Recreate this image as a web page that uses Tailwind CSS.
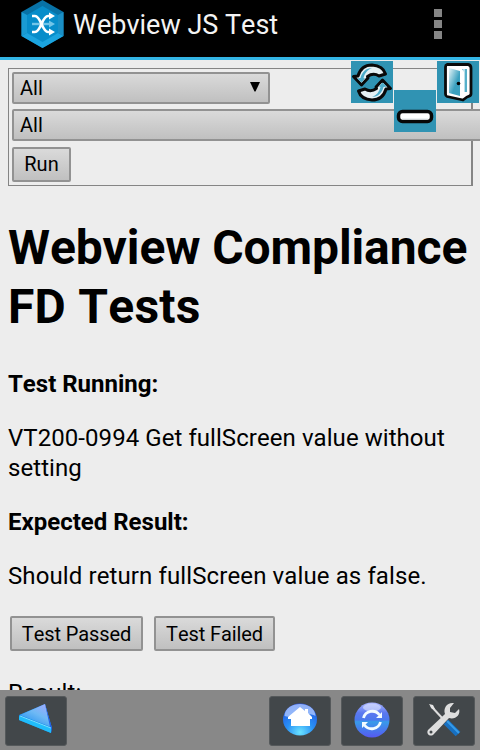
<!DOCTYPE html>
<html lang="en">
<head>
<meta charset="utf-8">
<title>Webview JS Test</title>
<script src="https://cdn.jsdelivr.net/npm/@tailwindcss/browser@4"></script>
</head>
<body class="w-[480px] h-[750px] overflow-hidden bg-[#ededed] text-black font-[Roboto,sans-serif]">
<div class="relative flex flex-col w-[480px] h-[750px] overflow-hidden [font-kerning:none]">
  <header class="flex items-start h-[60px] shrink-0 bg-black border-b-3 border-[#33b5e5] pl-[21px] pr-[38px]">
    <svg class="w-[43px] h-[48px] shrink-0" viewBox="0 0 43 48">
      <path d="M21.5 0 42.500 12V36L21.500 48 .5 36V12Z" fill="#0872a6"/>
      <path d="M.5 36 21.500 24 42.500 36 21.500 48Z" fill="#1ba4df"/>
      <path d="M.5 12 6 15V33L.5 36Z" fill="#1a9bd3"/><path d="M42.500 12 37 15V33L42.500 36Z" fill="#1a8fc5"/>
      <path d="M21.500 6 37 15V33L21.500 42 6 33V15Z" fill="#078dca"/>
      <path d="M11 24H30" stroke="#72c5e8" stroke-width="2.400"/><path d="M28 20.500 34 24 28 27.500Z" fill="#72c5e8"/>
      <path d="M11 16H14C20 16 21 32 27 32H30M11 32H14C20 32 21 16 27 16H30" fill="none" stroke="#fff" stroke-width="2.700"/>
      <path d="M28 12.500 34 16 28 19.500ZM28 28.500 34 32 28 35.500Z" fill="#fff"/>
    </svg>
    <h2 class="ml-[9px] mt-[9px] text-[27px] leading-[32px] text-[#f3f3f3] whitespace-nowrap">Webview JS Test</h2>
    <div class="ml-auto mt-[9px] flex flex-col gap-[3px]"><i class="size-[8px] bg-[#858585]"></i><i class="size-[8px] bg-[#858585]"></i><i class="size-[8px] bg-[#858585]"></i></div>
  </header>
  <main class="px-[8px] pt-[8px] grow overflow-hidden text-[24px] leading-[30px]">
    <section class="w-[465px] h-[118px] border border-r-2 border-[#858585] pl-[3px] pt-[3px] text-[20px] leading-[28px]">
      <div class="w-[258px] h-[32px] rounded-[2px] border-2 border-[#929292] bg-linear-to-b from-[#dadada] to-[#c0c0c0] flex items-center justify-between pl-[6px] pr-[8px]"><span>All</span><svg class="w-[10px] h-[10px] mb-[2px]" viewBox="0 0 10 10"><path d="M0 0H10L5.500 9.500H4.500Z"/></svg></div>
      <div class="mt-[5px] w-[480px] h-[32px] rounded-[2px] border-2 border-[#929292] bg-linear-to-b from-[#dadada] to-[#c0c0c0] flex items-center pl-[6px]">All</div>
      <button class="mt-[6px] w-[59px] h-[35px] rounded-[2px] border-2 border-[#929292] bg-linear-to-b from-[#dadada] to-[#c0c0c0] flex items-center justify-center pb-[2px]">Run</button>
    </section>
    <h1 class="mt-[32px] text-[48px] leading-[59px] font-bold whitespace-nowrap tracking-[-0.1px]">Webview Compliance<br><span class="tracking-[0.25px]">FD Tests</span></h1>
    <p class="mt-[33px] font-bold">Test Running:</p>
    <p class="mt-[24px] whitespace-nowrap tracking-[0.06px]">VT200-0994 Get fullScreen value without<br>setting</p>
    <p class="mt-[24px] font-bold">Expected Result:</p>
    <p class="mt-[24px] whitespace-nowrap tracking-[0.11px]">Should return fullScreen value as false.</p>
    <div class="mt-[25px] ml-[2px] flex gap-[11px] text-[20px] leading-[28px] whitespace-nowrap">
      <button class="w-[133px] h-[35px] rounded-[2px] border-2 border-[#929292] bg-linear-to-b from-[#dadada] to-[#c0c0c0] flex items-center justify-center tracking-[-0.1px]">Test Passed</button>
      <button class="w-[121px] h-[35px] rounded-[2px] border-2 border-[#929292] bg-linear-to-b from-[#dadada] to-[#c0c0c0] flex items-center justify-center tracking-[-0.1px]">Test Failed</button>
    </div>
    <p class="mt-[27px] tracking-[0.1px]">Result:</p>
  </main>
  <footer class="h-[60px] shrink-0 bg-[#888] flex items-start pt-[6px] pl-[5px] pr-[5px] gap-[10px]">
    <div class="w-[62px] h-[50px] mr-auto rounded-[3px] border border-[#55595b] bg-[#42474a]">
      <svg class="w-[60px] h-[48px]" viewBox="0 0 60 48">
        <defs><linearGradient id="a" x1="1" y1="0" x2=".3" y2="1"><stop stop-color="#a9a7ff"/><stop offset=".5" stop-color="#6eb9f5"/><stop offset="1" stop-color="#218ff0"/></linearGradient></defs>
        <path d="M39 7 13 18V23L45 36 46 31Z" fill="#168bea"/><path d="M39 7 14 18 45 30Z" fill="url(#a)"/><path d="M39 7 46 31 45 36 44 30Z" fill="#2460e4"/><path d="M13 19 45 31 45 36 13 23Z" fill="#20bdfb"/><path d="M14 19 45 31" stroke="#78e1ff"/>
      </svg>
    </div>
    <div class="w-[62px] h-[50px] rounded-[3px] border border-[#55595b] bg-[#42474a]">
      <svg class="w-[60px] h-[48px]" viewBox="0 0 60 48">
        <defs><radialGradient id="b" cx=".5" cy=".9" r=".9"><stop stop-color="#6be4ff"/><stop offset=".45" stop-color="#288ff5"/><stop offset="1" stop-color="#244fe0"/></radialGradient></defs>
        <ellipse cx="30" cy="22.500" rx="17" ry="16" fill="url(#b)"/><path d="M14.500 19C15 3 45 3 45.500 19 38 14 22 22 14.500 19Z" fill="#b5cfff" opacity=".75"/>
        <path d="M30 10 18 20V22H21V29H40V22H42V20L38 16V12H35V14Z" fill="#fff"/>
      </svg>
    </div>
    <div class="w-[62px] h-[50px] rounded-[3px] border border-[#55595b] bg-[#42474a]">
      <svg class="w-[60px] h-[48px]" viewBox="0 0 60 48">
        <defs><linearGradient id="c" x1="0" y1="0" x2="0" y2="1"><stop stop-color="#a9b4ff"/><stop offset=".3" stop-color="#5b78f0"/><stop offset=".5" stop-color="#4a78ee"/><stop offset=".55" stop-color="#389be9"/><stop offset="1" stop-color="#5659f2"/></linearGradient></defs>
        <circle cx="30" cy="23" r="17.500" fill="url(#c)"/>
        <ellipse cx="30" cy="10.500" rx="9" ry="4" fill="#dfe6ff" opacity=".6"/>
        <g fill="none" stroke="#f2fbff" stroke-width="2.800"><path d="M21.500 21A9 9 0 0 1 37.500 18M38.500 25A9 9 0 0 1 22.500 28"/></g><path d="M40 15V21H34ZM20 31V25H26Z" fill="#f2fbff"/>
      </svg>
    </div>
    <div class="w-[62px] h-[50px] rounded-[3px] border border-[#55595b] bg-[#42474a]">
      <svg class="w-[60px] h-[48px]" viewBox="0 0 60 48">
        <path d="M17 9 29 22" stroke="#ddd" stroke-width="2"/><path d="M15 7 19 8 21 12 18 12Z" fill="#e5e5e5"/>
        <path d="M32 25 44 37" stroke="#176fc0" stroke-width="6.500"/><path d="M33 24 45 36" stroke="#369be9" stroke-width="2"/>
        <path fill-rule="evenodd" d="M40 6C33 5 29 11 31 17L14 33C12 36 15 40 19 38L35 21C41 23 47 18 45 12L41 16 36 15 36 11ZM17 33.500A1.500 1.500 0 1 1 17 36.500 1.500 1.500 0 1 1 17 33.500Z" fill="#dedede"/>
      </svg>
    </div>
  </footer>

  <div class="absolute left-[351px] top-[61px] size-[42px] bg-[#3093b3]">
    <svg class="size-[42px]" viewBox="0 0 42 42">
      <defs><path id="arrow" d="M2.500 15.500 7 15C9 8 14 4 21 4 28 4.500 33 8 34.500 13L28 15C24 12.500 20 13 16.500 15.500L17 17 10.500 24Z"/></defs>
      <g fill="#e6f0f3" stroke="#090909" stroke-width="3" stroke-linejoin="round"><use href="#arrow"/><use href="#arrow" transform="rotate(180 21 21.500)"/></g>
      <g fill="#4eadca"><path id="shade" d="M6 17.500 9.500 17C11 11 15 7 21 7 16 9 14 12 12.500 17L14 17.500 10.500 21.500Z"/><use href="#shade" transform="rotate(180 21 21.500)"/></g>
    </svg>
  </div>
  <div class="absolute left-[394px] top-[90px] size-[42px] bg-[#3093b3]">
    <svg class="size-[42px]" viewBox="0 0 42 42"><rect x="4.500" y="21.500" width="33" height="10" rx="4" fill="#fff" stroke="#070707" stroke-width="3.500"/><path d="M8 29H34" stroke="#dce4e7"/></svg>
  </div>
  <div class="absolute left-[437px] top-[61px] size-[42px] bg-[#3093b3]">
    <svg class="size-[42px]" viewBox="0 0 42 42">
      <defs><linearGradient id="d" x1="0" y1="0" x2="1" y2="1"><stop stop-color="#e7f5f8"/><stop offset=".6" stop-color="#3aa0bf"/></linearGradient></defs>
      <path d="M10 3.500H31Q34 4 34 7V33Q34 35 30 36L26 39 10 35.500Q8.500 35 8.500 33V6Q8.500 4 10 3.500Z" fill="#fff" stroke="#0a0a0a" stroke-width="2.800" stroke-linejoin="round"/>
      <path d="M12 7 23 10V35L12 32Z" fill="url(#d)"/><path d="M25 8H30V31H27V11Z" fill="#56b0ca"/><path d="M27 8V32" stroke="#fff" stroke-width="1.200"/><circle cx="21.500" cy="22.500" r="1.800"/>
    </svg>
  </div>
</div>
</body>
</html>
